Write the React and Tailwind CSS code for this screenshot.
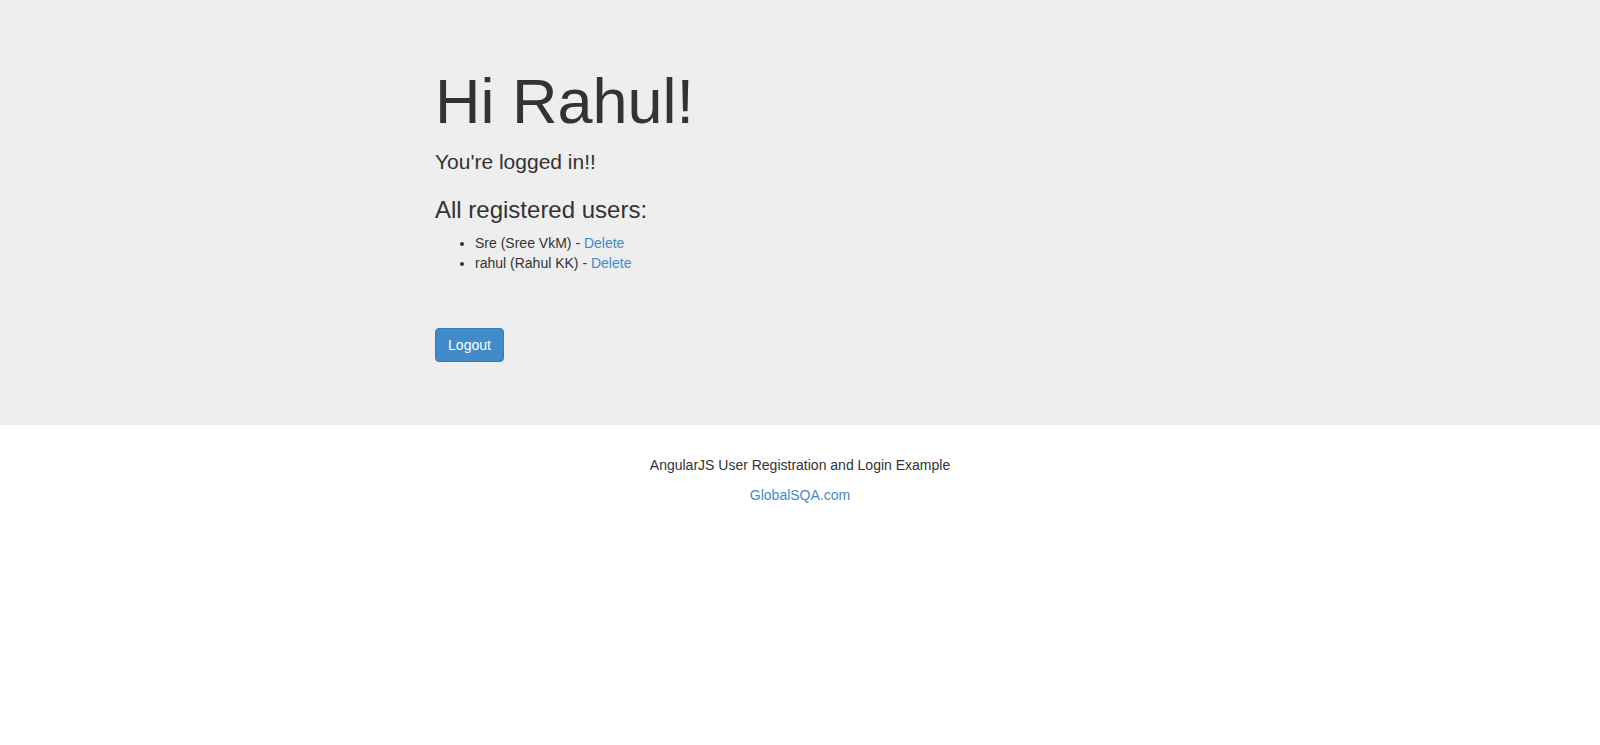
export default function App() {
  const users = [
    { username: "Sre", name: "Sree VkM" },
    { username: "rahul", name: "Rahul KK" },
  ];
  return (
    <div className="min-h-[745px] bg-white text-[#333] text-[14px] leading-[20px]" style={{ fontFamily: '"Liberation Sans", Arial, sans-serif' }}>
      <div className="bg-[#eeeeee] pt-[67px] pb-[63px]">
        <div className="mx-auto w-[1170px]">
          <div className="pl-[220px]">
            <h1 className="m-0 text-[63px] leading-[1.1] font-normal text-[#333]">Hi Rahul!</h1>
            <p className="mt-[11px] mb-0 text-[21px] leading-[30px] font-normal">You're logged in!!</p>
            <h3 className="mt-[20px] mb-0 text-[24px] leading-[1.1] font-normal">All registered users:</h3>
            <ul className="mt-[9px] mb-0 pl-[40px] list-disc">
              {users.map((u) => (
                <li key={u.username} className="leading-[20px]">
                  {u.username} ({u.name}) -{" "}
                  <a href="#" className="text-[#428bca] no-underline">Delete</a>
                </li>
              ))}
            </ul>
            <div className="mt-[55px]">
              <a href="#" className="inline-flex items-center justify-center h-[34px] w-[69px] rounded-[4px] border border-[#357ebd] bg-[#428bca] text-white text-[14px] leading-[20px]">
                Logout
              </a>
            </div>
          </div>
        </div>
      </div>
      <div className="pt-[30px] text-center">
        <p className="m-0 mb-[10px] leading-[20px]">AngularJS User Registration and Login Example</p>
        <p className="m-0 leading-[20px]">
          <a href="#" className="text-[#428bca]">GlobalSQA.com</a>
        </p>
      </div>
    </div>
  );
}
